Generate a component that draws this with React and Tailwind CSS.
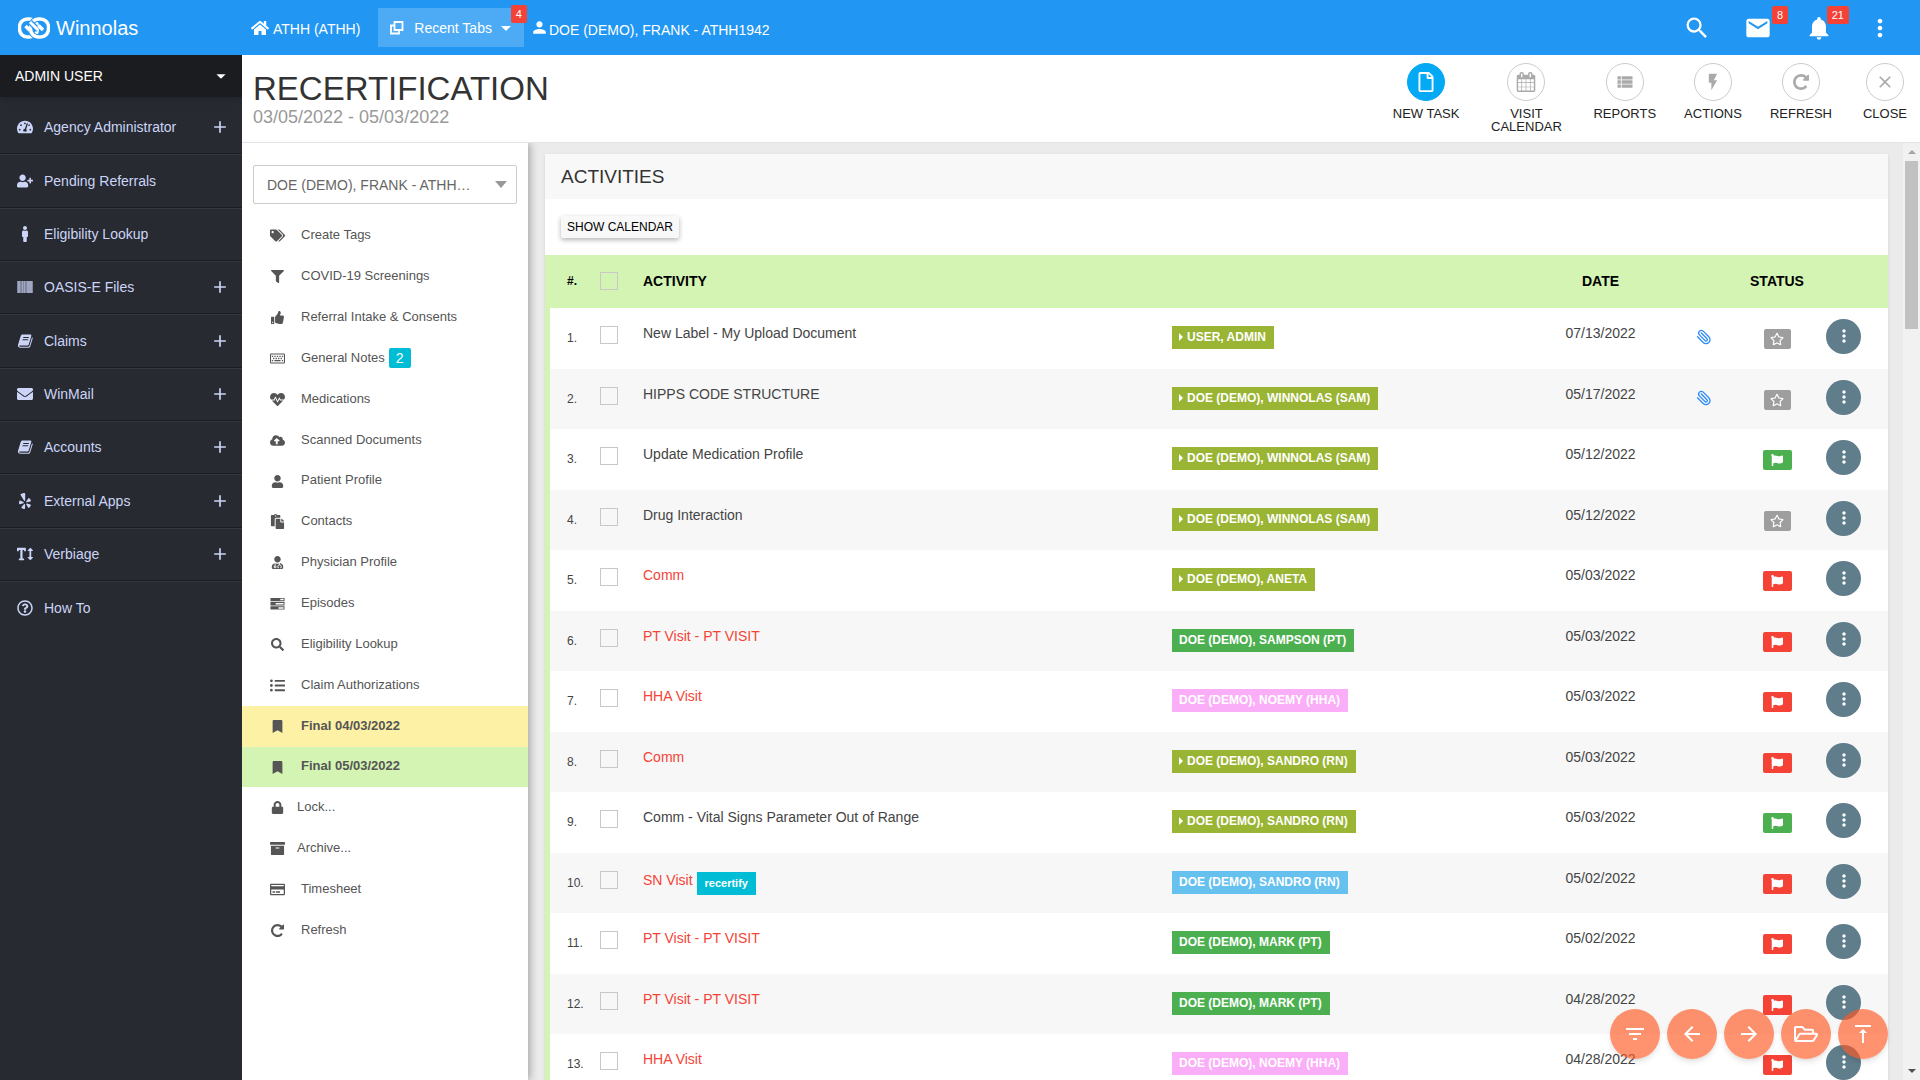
import React from "react";
import {
  FaArchive, FaBookmark, FaCloudUploadAlt, FaEnvelope, FaFilter, FaFlag, FaHeartbeat, FaHome, FaListUl,
  FaLock, FaMale, FaPaste, FaRegCreditCard, FaRegFile, FaRegFolderOpen, FaRegKeyboard, FaRegQuestionCircle,
  FaRegStar, FaSearch, FaTachometerAlt, FaTags, FaTextHeight, FaThumbsUp, FaUser, FaUserMd, FaUserPlus, FaYelp,
} from "react-icons/fa";
import {
  MdAdd, MdArrowBack, MdArrowForward, MdClose, MdEmail, MdFilterList, MdFlashOn, MdMoreVert, MdNotifications,
  MdPerson, MdSearch, MdViewList, MdVerticalAlignTop, MdArrowDropDown,
} from "react-icons/md";
import { Paperclip } from "lucide-react";

// Circular arrow with a solid corner head
function RotateIcon({ className }) {
  return (
    <svg viewBox="0 0 1536 1536" className={className} fill="currentColor" aria-hidden="true">
      <path d="M1536 128v448q0 26-19 45t-45 19h-448q-42 0-59-40-17-39 14-69l138-138q-148-137-349-137-104 0-198.500 40.500t-163.500 109.500-109.500 163.500-40.500 198.500 40.500 198.500 109.500 163.500 163.500 109.500 198.500 40.500q119 0 225-52t179-147q7-10 23-12 15 0 25 9l137 138q9 8 9.500 20.500t-7.500 22.500q-109 132-264 204.500t-327 72.500q-156 0-298-61t-245-164-164-245-61-298 61-298 164-245 245-164 298-61q147 0 284.500 55.500t244.500 156.500l130-129q29-31 70-14 39 17 39 59z" />
    </svg>
  );
}

function BoldCalendarIcon({ className }) {
  return (
    <svg viewBox="0 0 1664 1792" className={className} fill="currentColor" aria-hidden="true">
      <path d="M128 1664h288v-288h-288v288zm352 0h320v-288h-320v288zm-352-352h288v-320h-288v320zm352 0h320v-320h-320v320zm-352-384h288v-288h-288v288zm736 736h320v-288h-320v288zm-384-736h320v-288h-320v288zm768 736h288v-288h-288v288zm-384-352h320v-320h-320v320zm-352-864v-288q0-13-9.500-22.500t-22.500-9.500h-64q-13 0-22.500 9.500t-9.500 22.500v288q0 13 9.500 22.500t22.500 9.500h64q13 0 22.500-9.500t9.500-22.500zm736 864h288v-320h-288v320zm-384-384h320v-288h-320v288zm384 0h288v-288h-288v288zm32-480v-288q0-13-9.500-22.500t-22.500-9.500h-64q-13 0-22.500 9.500t-9.500 22.500v288q0 13 9.500 22.500t22.500 9.500h64q13 0 22.500-9.500t9.500-22.500zm384-64v1280q0 52-38 90t-90 38h-1408q-52 0-90-38t-38-90v-1280q0-52 38-90t90-38h128v-96q0-66 47-113t113-47h64q66 0 113 47t47 113v96h384v-96q0-66 47-113t113-47h64q66 0 113 47t47 113v96h128q52 0 90 38t38 90z" />
    </svg>
  );
}

function SlantedBookIcon({ className }) {
  return (
    <svg viewBox="0 0 16 16" className={className} fill="currentColor" aria-hidden="true">
      <path fillRule="evenodd" d="M5.500 1.500h7.700c.9 0 1.400.7 1.100 1.500l-2.600 8.400c-.2.700-.8 1.100-1.500 1.100H2.700c-.5 0-.6.400-.4.700.2.400.6.500 1.100.5h7.700c.6 0 1.100-.3 1.300-.9L15 4.200c.7.400.8 1 .6 1.600L13.200 13.400c-.3.900-1 1.400-1.900 1.400H3.200C1.700 14.800.6 13.500 1 12.100L3.700 3c.3-.9 1-1.500 1.800-1.500zM6.400 4l-.3 1h5.600l.3-1zM5.700 6.200l-.3 1H11l.3-1z" />
    </svg>
  );
}

function BarcodeIcon({ className }) {
  return (
    <svg viewBox="0 0 16 16" className={className} fill="currentColor" aria-hidden="true">
      <path opacity=".55" d="M0 2h16v12H0z" />
      <path opacity=".4" d="M1 2h2v12H1zM5 2h1v12H5zM7 2h1v12H7zM10 2h5v12h-5z" />
    </svg>
  );
}

function ProgressBarsIcon({ className }) {
  return (
    <svg viewBox="0 0 16 16" className={className} fill="currentColor" aria-hidden="true">
      <path fillRule="evenodd" d="M.5 2h15v3.500H.5zM11 3v1.500h3.500V3zM.5 6.500h15V10H.5zM6 7.500V9h8.500V7.500zM.5 11h15v3.500H.5zM9 12v1.500h5.500V12z" />
    </svg>
  );
}

function Logo() {
  return (
    <svg viewBox="0 0 32 22" className="h-[22px] w-8" fill="none" aria-hidden="true">
      <rect x="1.500" y="2" width="18" height="18" rx="8" stroke="white" strokeWidth="3.500" />
      <rect x="12.500" y="2" width="18" height="18" rx="8" stroke="#2196f3" strokeWidth="5.500" />
      <rect x="12.500" y="2" width="18" height="18" rx="8" stroke="white" strokeWidth="3.500" />
      <path d="M12 5l8 8" stroke="#2196f3" strokeWidth="5.500" />
      <path d="M12 5l8 8" stroke="white" strokeWidth="3" />
      <path d="M7.500 9l4.500 4.500M20.500 8.500L25 13" stroke="white" strokeWidth="3.500" />
    </svg>
  );
}

const navItems = [
  { label: "Agency Administrator", icon: FaTachometerAlt, more: true },
  { label: "Pending Referrals", icon: FaUserPlus },
  { label: "Eligibility Lookup", icon: FaMale },
  { label: "OASIS-E Files", icon: BarcodeIcon, more: true },
  { label: "Claims", icon: SlantedBookIcon, more: true },
  { label: "WinMail", icon: FaEnvelope, more: true },
  { label: "Accounts", icon: SlantedBookIcon, more: true },
  { label: "External Apps", icon: FaYelp, more: true },
  { label: "Verbiage", icon: FaTextHeight, more: true },
  { label: "How To", icon: FaRegQuestionCircle },
];

const patientItems = [
  { label: "Create Tags", icon: FaTags },
  { label: "COVID-19 Screenings", icon: FaFilter, small: true },
  { label: "Referral Intake & Consents", icon: FaThumbsUp, small: true },
  { label: "General Notes", icon: FaRegKeyboard, badge: 2 },
  { label: "Medications", icon: FaHeartbeat },
  { label: "Scanned Documents", icon: FaCloudUploadAlt },
  { label: "Patient Profile", icon: FaUser, small: true },
  { label: "Contacts", icon: FaPaste },
  { label: "Physician Profile", icon: FaUserMd, small: true },
  { label: "Episodes", icon: ProgressBarsIcon },
  { label: "Eligibility Lookup", icon: FaSearch, small: true },
  { label: "Claim Authorizations", icon: FaListUl },
  { label: "Final 04/03/2022", icon: FaBookmark, small: true, tone: "bg-[#fdf1a6] font-bold" },
  { label: "Final 05/03/2022", icon: FaBookmark, small: true, tone: "bg-[#d3f4b2] font-bold" },
  { label: "Lock...", icon: FaLock, small: true, tight: true },
  { label: "Archive...", icon: FaArchive, tight: true },
  { label: "Timesheet", icon: FaRegCreditCard },
  { label: "Refresh", icon: RotateIcon, small: true },
];

const OLIVE = "bg-[#9ab434]";
const GREEN = "bg-[#4caf50]";
const PINK = "bg-[#fbaef8]";
const SKY = "bg-[#67c1ef]";

const activities = [
  { name: "New Label - My Upload Document", user: "USER, ADMIN", tone: OLIVE, date: "07/13/2022", clip: true, status: "star" },
  { name: "HIPPS CODE STRUCTURE", user: "DOE (DEMO), WINNOLAS (SAM)", tone: OLIVE, date: "05/17/2022", clip: true, status: "star" },
  { name: "Update Medication Profile", user: "DOE (DEMO), WINNOLAS (SAM)", tone: OLIVE, date: "05/12/2022", status: "done" },
  { name: "Drug Interaction", user: "DOE (DEMO), WINNOLAS (SAM)", tone: OLIVE, date: "05/12/2022", status: "star" },
  { name: "Comm", user: "DOE (DEMO), ANETA", tone: OLIVE, date: "05/03/2022", status: "late" },
  { name: "PT Visit - PT VISIT", user: "DOE (DEMO), SAMPSON (PT)", tone: GREEN, date: "05/03/2022", status: "late" },
  { name: "HHA Visit", user: "DOE (DEMO), NOEMY (HHA)", tone: PINK, date: "05/03/2022", status: "late" },
  { name: "Comm", user: "DOE (DEMO), SANDRO (RN)", tone: OLIVE, date: "05/03/2022", status: "late" },
  { name: "Comm - Vital Signs Parameter Out of Range", user: "DOE (DEMO), SANDRO (RN)", tone: OLIVE, date: "05/03/2022", status: "done" },
  { name: "SN Visit", tag: "recertify", user: "DOE (DEMO), SANDRO (RN)", tone: SKY, date: "05/02/2022", status: "late" },
  { name: "PT Visit - PT VISIT", user: "DOE (DEMO), MARK (PT)", tone: GREEN, date: "05/02/2022", status: "late" },
  { name: "PT Visit - PT VISIT", user: "DOE (DEMO), MARK (PT)", tone: GREEN, date: "04/28/2022", status: "late" },
  { name: "HHA Visit", user: "DOE (DEMO), NOEMY (HHA)", tone: PINK, date: "04/28/2022", status: "late" },
];

const tools = [
  { label: "NEW TASK", icon: FaRegFile, size: "size-5", primary: true },
  { label: "VISIT CALENDAR", icon: BoldCalendarIcon, size: "size-5", width: "w-[78px]" },
  { label: "REPORTS", icon: MdViewList, size: "size-5" },
  { label: "ACTIONS", icon: MdFlashOn, size: "size-5" },
  { label: "REFRESH", icon: RotateIcon, size: "size-4" },
  { label: "CLOSE", icon: MdClose, size: "size-5", width: "w-[50px]" },
];

const floating = [
  { label: "Filter", icon: MdFilterList },
  { label: "Previous", icon: MdArrowBack },
  { label: "Next", icon: MdArrowForward },
  { label: "Open folder", icon: FaRegFolderOpen },
  { label: "Back to top", icon: MdVerticalAlignTop },
];

function CountBadge({ children, className }) {
  return (
    <span className={`absolute rounded-xs bg-[#f44336] px-[5px] text-[11px] leading-[18px] text-white ${className}`}>
      {children}
    </span>
  );
}

function TopBar() {
  return (
    <header className="flex h-[55px] shrink-0 items-center bg-[#2196f3] pr-[26px] text-sm text-white">
      <a href="#" className="flex w-[251px] shrink-0 items-center gap-1.5 pl-[18px] text-xl">
        <Logo />
        Winnolas
      </a>
      <a href="#" className="flex items-center gap-1">
        <FaHome className="size-[18px]" />
        <span className="pt-0.5">ATHH (ATHH)</span>
      </a>
      <button type="button" className="relative ml-[18px] flex h-[39px] items-center bg-white/20 pr-1.5 pl-3">
        <svg viewBox="0 0 14 14" className="mr-2.5 size-3.5" fill="none" stroke="white" strokeWidth="1.800" aria-hidden="true">
          <path d="M4.500 1h8v8h-8zM4 4.500h-3v8h8v-3" />
        </svg>
        Recent Tabs
        <MdArrowDropDown className="ml-0.5 size-6" />
        <CountBadge className="-top-[3px] -right-[3px]">4</CountBadge>
      </button>
      <a href="#" className="ml-1.5 flex items-center">
        <MdPerson className="size-[19px]" />
        <span className="pt-1">DOE (DEMO), FRANK - ATHH1942</span>
      </a>
      <div className="ml-auto flex items-center gap-[33px]">
        <button type="button" aria-label="Search"><MdSearch className="size-7" /></button>
        <button type="button" aria-label="Mail" className="relative">
          <MdEmail className="size-7" />
          <CountBadge className="-top-2 -right-4">8</CountBadge>
        </button>
        <button type="button" aria-label="Notifications" className="relative">
          <MdNotifications className="size-7" />
          <CountBadge className="-top-2 -right-4">21</CountBadge>
        </button>
        <button type="button" aria-label="More"><MdMoreVert className="size-7" /></button>
      </div>
    </header>
  );
}

function Sidebar() {
  return (
    <aside className="w-[242px] shrink-0 bg-[#272a31] text-sm text-[#ccd5f7]">
      <button type="button" className="flex h-[42px] w-full items-center justify-between bg-[#1a1c20] pr-2.5 pl-[15px] text-white shadow-md">
        ADMIN USER
        <MdArrowDropDown className="size-[22px]" />
      </button>
      <ul className="pt-1">
        {navItems.map(({ label, icon: Icon, more }) => (
          <li key={label} className="h-[53px] border-b border-[#1a1c20] shadow-[0_1px_0_#34373e] last:border-0 last:shadow-none nth-[3n+2]:h-[54px]">
            <a href="#" className="flex h-full items-center pr-3 pl-[17px]">
              <Icon className="mr-[11px] size-4 shrink-0" />
              {label}
              {more && <MdAdd className="ml-auto size-5" />}
            </a>
          </li>
        ))}
      </ul>
    </aside>
  );
}

function PageHeader() {
  return (
    <div className="flex h-[88px] shrink-0 justify-between border-b border-[#e4e4e4] bg-white pr-[10px] pl-[11px]">
      <div className="pt-4">
        <h1 className="text-[33px] leading-9 text-[#333]">RECERTIFICATION</h1>
        <p className="text-lg leading-5 text-[#999]">03/05/2022 - 05/03/2022</p>
      </div>
      <div className="flex items-start gap-7 pt-2">
        {tools.map(({ label, icon: Icon, size, width, primary }) => (
          <button key={label} type="button" className={`flex flex-col items-center text-[13px] leading-[13px] text-[#222] ${width || ""}`}>
            <span
              className={`mb-1.5 flex size-[38px] items-center justify-center rounded-full border ${
                primary ? "border-[#03a9f4] bg-[#03a9f4] text-white" : "border-[#ccc] text-[#aaa]"
              }`}
            >
              <Icon className={size} />
            </span>
            {label}
          </button>
        ))}
      </div>
    </div>
  );
}

function PatientMenu() {
  return (
    <nav className="z-10 w-[286px] shrink-0 bg-white shadow-[2px_0_8px_rgba(0,0,0,0.3)]">
      <div className="relative mt-[22px] mb-[11px] ml-[11px] w-[264px]">
        <select
          aria-label="Patient"
          className="h-[39px] w-full appearance-none rounded-xs border border-[#ccc] bg-white pr-10 pl-[13px] text-sm text-ellipsis text-[#666]"
        >
          <option>DOE (DEMO), FRANK - ATHH…</option>
        </select>
        <span className="pointer-events-none absolute top-4 right-2.5 border-x-[6px] border-t-[7px] border-x-transparent border-t-[#999]" />
      </div>
      <ul className="text-[13px] text-[#555]">
        {patientItems.map(({ label, icon: Icon, badge, tone, tight, small }) => (
          <li key={label} className={`h-[41px] nth-[7n]:h-10 ${tone || ""}`}>
            <a href="#" className="flex h-full items-center pb-0.5 pl-7">
              <span className={`flex w-[15px] shrink-0 justify-center pt-0.5 ${tight ? "mr-3" : "mr-4"}`}>
                <Icon className={small ? "size-[13px]" : "size-[15px]"} />
              </span>
              {label}
              {badge && <span className="ml-1 rounded-xs bg-[#00bcd4] px-[7px] text-sm leading-5 text-white">{badge}</span>}
            </a>
          </li>
        ))}
      </ul>
    </nav>
  );
}

function StatusBadge({ status }) {
  if (status === "star") {
    return (
      <span className="inline-flex h-5 w-[27px] items-center justify-center rounded-xs bg-[#9e9e9e] text-white">
        <FaRegStar className="size-3.5" />
      </span>
    );
  }
  return (
    <span className={`inline-flex h-5 w-[29px] items-center justify-center rounded-xs text-white ${status === "done" ? "bg-[#4caf50]" : "bg-[#f44336]"}`}>
      <FaFlag className="size-3" />
    </span>
  );
}

const boxClass = "block size-[18px] appearance-none border border-[#c8c8c8] bg-transparent";

function ActivityTable() {
  return (
    <table className="w-full table-fixed border-separate border-spacing-0 text-left text-sm text-[#444]">
      <colgroup>
        <col className="w-[55px]" />
        <col className="w-[43px]" />
        <col />
        <col className="w-[361px]" />
        <col className="w-[135px]" />
        <col className="w-[69px]" />
        <col className="w-[80px]" />
        <col className="w-[71px]" />
      </colgroup>
      <thead>
        <tr className="h-[53px] bg-[#d3f4b2] text-black [&>th]:pb-0.5">
          <th className="pl-[22px] text-xs">#.</th>
          <th><input type="checkbox" aria-label="Select all" className={boxClass} /></th>
          <th>ACTIVITY</th>
          <th />
          <th className="text-center">DATE</th>
          <th />
          <th className="text-center">STATUS</th>
          <th />
        </tr>
      </thead>
      <tbody>
        {activities.map((row, i) => (
          <tr key={i} className="h-[60px] odd:h-[61px] even:bg-[#f7f7f7] [&>td]:align-top">
            <td className="border-l-5 border-[#d3f4b2] pt-[22px] pl-[17px] text-xs">{i + 1}.</td>
            <td className="pt-[18px]"><input type="checkbox" aria-label={`Select ${row.name}`} className={boxClass} /></td>
            <td className={`pt-[15px] ${row.status === "late" ? "text-[#f44336]" : ""}`}>
              {row.name}
              {row.tag && <span className="mt-1 ml-1 inline-block bg-[#00bcd4] px-2 align-middle text-[11px] leading-[23px] font-bold text-white">{row.tag}</span>}
            </td>
            <td className="pt-[18px]">
              <span className={`flex h-[23px] w-fit items-center pr-2 pb-0.5 pl-[7px] text-xs font-bold text-white ${row.tone}`}>
                {row.tone === OLIVE && (
                  <svg viewBox="0 0 4 8" className="mr-1 h-2 w-1" fill="currentColor" aria-hidden="true">
                    <path d="M0 0l4 4-4 4z" />
                  </svg>
                )}
                {row.user}
              </span>
            </td>
            <td className="pt-[15px] text-center">{row.date}</td>
            <td className="pt-[21px] pl-7 text-[#2f8cf5]">{row.clip && <Paperclip className="size-4 -scale-x-100" />}</td>
            <td className="pt-[21px] text-center"><StatusBadge status={row.status} /></td>
            <td className="pt-[11px] pl-[9px]">
              <button type="button" aria-label="Row menu" className="flex size-[35px] items-center justify-center rounded-full bg-[#607d8b] pb-0.5 text-white">
                <MdMoreVert className="size-5" />
              </button>
            </td>
          </tr>
        ))}
      </tbody>
    </table>
  );
}

function Scrollbar() {
  return (
    <div className="flex w-[17px] shrink-0 flex-col items-center justify-between bg-[#f1f1f1]">
      <div className="flex flex-col items-center">
        <span className="my-[7px] border-x-[4px] border-b-[4px] border-x-transparent border-b-[#a3a3a3]" />
        <div className="h-[168px] w-[13px] bg-[#c1c1c1]" />
      </div>
      <span className="mb-[7px] border-x-[4px] border-t-[4px] border-x-transparent border-t-[#505050]" />
    </div>
  );
}

export default function App() {
  return (
    <div className="flex h-screen flex-col overflow-hidden bg-[#ebebeb] font-['Liberation_Sans',Arial,sans-serif]">
      <TopBar />
      <div className="flex min-h-0 flex-1">
        <Sidebar />
        <div className="flex min-w-0 flex-1 flex-col">
          <PageHeader />
          <div className="flex min-h-0 flex-1 overflow-hidden">
            <PatientMenu />
            <main className="min-w-0 flex-1 overflow-hidden pt-[11px] pr-[15px] pl-[17px]">
              <section className="bg-white shadow">
                <h2 className="bg-[#f8f8f8] px-4 text-[19px] leading-[45px] text-[#333]">ACTIVITIES</h2>
                <div className="px-4 pt-[17px] pb-[17px]">
                  <button type="button" className="block h-[22px] rounded-xs bg-[#f8f8f8] px-1.5 text-xs text-black shadow-[0_2px_5px_rgba(0,0,0,0.3)]">
                    SHOW CALENDAR
                  </button>
                </div>
                <ActivityTable />
              </section>
            </main>
            <Scrollbar />
          </div>
        </div>
      </div>
      <div className="fixed right-8 bottom-[21px] z-20 flex gap-[7px]">
        {floating.map(({ label, icon: Icon }) => (
          <button key={label} type="button" aria-label={label} className="flex size-[50px] items-center justify-center rounded-full bg-[#ff5722]/65 text-white shadow-md">
            <Icon className="size-6" />
          </button>
        ))}
      </div>
    </div>
  );
}
